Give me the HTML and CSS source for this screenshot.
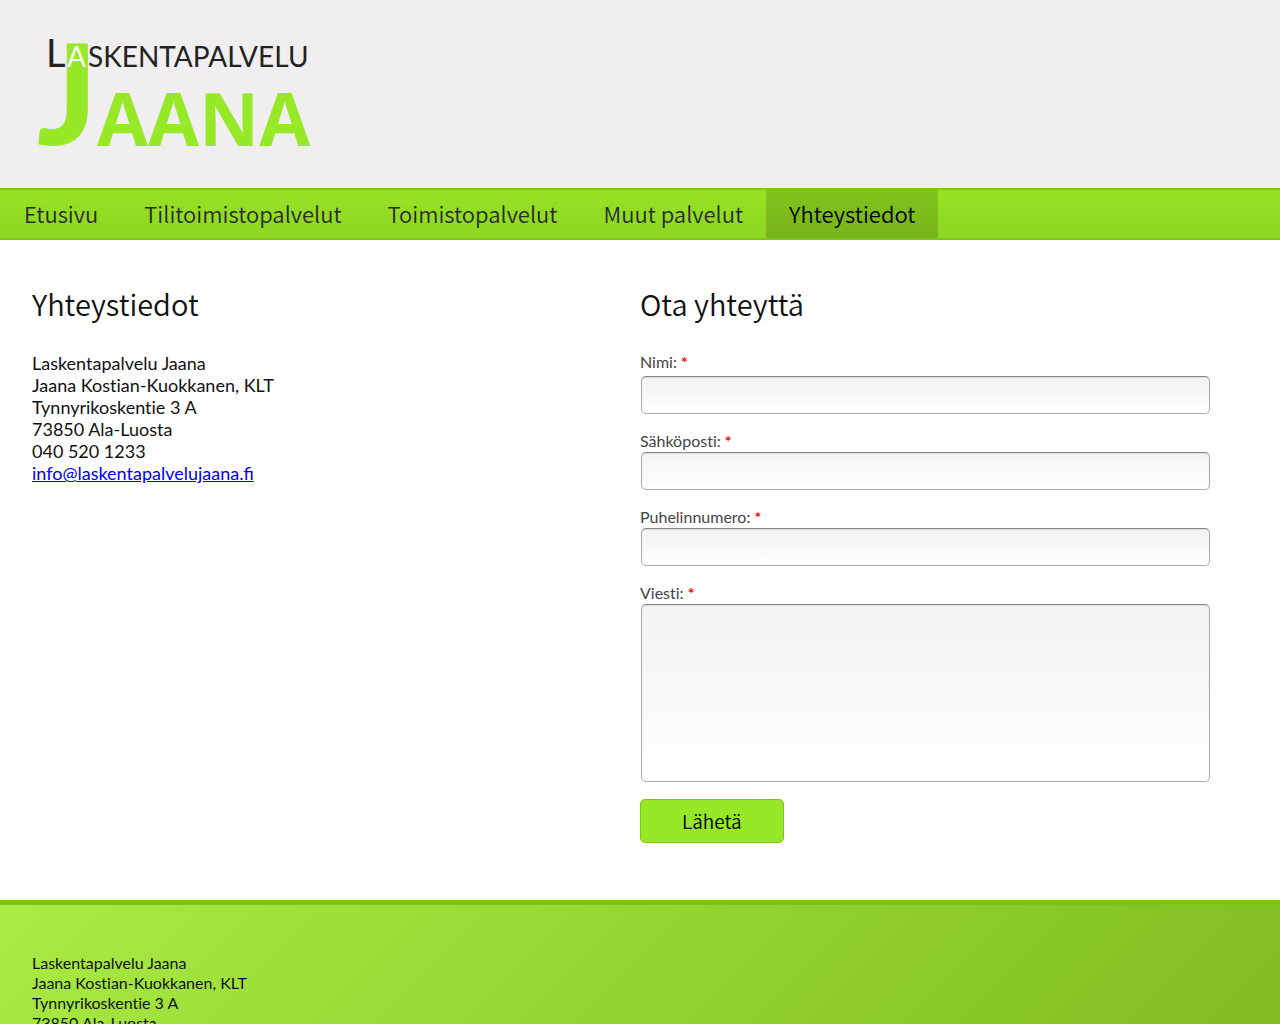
FILE: index.html
```html
<!DOCTYPE html>
<html lang="fi">
<head>
<meta charset="utf-8">
<meta name="viewport" content="width=device-width, initial-scale=1">
<title>Yhteystiedot</title>
<link rel="stylesheet" href="styles.css">
</head>
<body>
<header class="header">
  <svg class="logo" viewBox="0 0 292 120" role="img" aria-label="Laskentapalvelu Jaana">
    <rect class="logo-back" width="292" height="120"/>
    <text class="logo-j" x="5" y="113">J</text>
    <text class="logo-jaana" x="65" y="114">AANA</text>
    <text class="logo-cap" x="14" y="35">L</text>
    <text class="logo-small logo-white" x="35" y="35">A</text>
    <text class="logo-small" x="56" y="35">SKENTAPALVELU</text>
  </svg>
</header>
<nav class="nav">
  <a href="#">Etusivu</a>
  <a href="#">Tilitoimistopalvelut</a>
  <a href="#">Toimistopalvelut</a>
  <a href="#">Muut palvelut</a>
  <a class="active" href="#">Yhteystiedot</a>
</nav>
<main class="main">
  <section>
    <h1 class="title">Yhteystiedot</h1>
    <address class="contact">Laskentapalvelu Jaana<br>Jaana Kostian-Kuokkanen, KLT<br>Tynnyrikoskentie 3 A<br>73850 Ala-Luosta<br>040 520 1233<br><a href="mailto:info@laskentapalvelujaana.fi">info@laskentapalvelujaana.fi</a></address>
  </section>
  <section>
    <h2 class="title">Ota yhteyttä</h2>
    <form class="form">
      <div class="field field-first"><label for="name">Nimi: <span class="req">*</span></label><input id="name" type="text"></div>
      <div class="field"><label for="email">Sähköposti: <span class="req">*</span></label><input id="email" type="email"></div>
      <div class="field"><label for="phone">Puhelinnumero: <span class="req">*</span></label><input id="phone" type="tel"></div>
      <div class="field"><label for="message">Viesti: <span class="req">*</span></label><textarea id="message"></textarea></div>
      <button class="send" type="submit">Lähetä</button>
    </form>
  </section>
</main>
<footer class="footer">
  <address>Laskentapalvelu Jaana<br>Jaana Kostian-Kuokkanen, KLT<br>Tynnyrikoskentie 3 A<br>73850 Ala-Luosta<br>040 520 1233</address>
</footer>
</body>
</html>
```
FILE: styles.css
```css
* { box-sizing: border-box; }
body {
  margin: 0;
  background: #fff;
  color: #111;
  font-family: Lato, sans-serif;
  font-size: 16px;
  font-variant-ligatures: none;
  line-height: 20px;
}
address { font-style: normal; }
.header { background: #efefef; padding: 32px 32px 36px; }
.logo { display: block; width: 292px; height: 120px; overflow: visible; }
.logo-back { fill: #f0eeee; }
.logo-j, .logo-jaana { fill: #97e827; }
.logo-j { font: 900 140px Lato, sans-serif; }
.logo-jaana { font: 700 74px "Open Sans", sans-serif; }
.logo-cap, .logo-small { fill: #222; font-family: Lato, sans-serif; }
.logo-cap { font-size: 38px; }
.logo-small { font-size: 28px; }
.logo-white { fill: #fff; }
.nav {
  display: flex;
  flex-wrap: wrap;
  padding-left: 1px;
  background: linear-gradient(#97e324, #8dd622);
  border-top: 2px solid #7dc417;
  border-bottom: 2px solid #7dc417;
}
.nav a {
  padding: 0 23px 2px;
  color: #2a2a2a;
  font: 350 22px/46px "Noto Sans CJK SC", sans-serif;
  text-decoration: none;
}
.nav .active { background: linear-gradient(#80c41c, #78b41c); color: #000; }
.main {
  display: grid;
  grid-template-columns: 1fr 1fr;
  padding: 44px 32px 57px;
}
.title {
  margin: 0 0 30px;
  font: 350 29px/38px "Noto Sans CJK SC", sans-serif;
}
.contact { font-size: 18px; line-height: 22px; }
.contact a { color: #00e; font-variant-ligatures: normal; }
.form { padding-right: 38px; }
.field { display: flex; flex-direction: column; margin-bottom: 18px; }
.field:last-of-type { margin-bottom: 17px; }
.field label { padding-bottom: 2px; color: #444; line-height: 18px; }
.field-first label { padding-bottom: 4px; line-height: 20px; }
.req { color: #f00; font-weight: 700; }
.field input, .field textarea {
  height: 38px;
  margin: 0 0 0 1px;
  padding: 8px;
  border: 1px solid #aaa;
  border-top-color: #888;
  border-radius: 5px;
  background: linear-gradient(#f3f3f3, #fff);
  box-shadow: inset 0 1px 1px #ddd;
  font: inherit;
}
.field textarea { height: 178px; resize: none; }
.send {
  display: block;
  height: 44px;
  padding: 0 41px;
  border: 1px solid #7dc417;
  border-radius: 5px;
  background: #97e827;
  color: #000;
  font: 350 19px/40px "Noto Sans CJK SC", sans-serif;
}
.footer {
  padding: 48px 32px;
  border-top: 5px solid #7dc417;
  background: linear-gradient(135deg, #a9ec43, #7dba1f);
}
```
